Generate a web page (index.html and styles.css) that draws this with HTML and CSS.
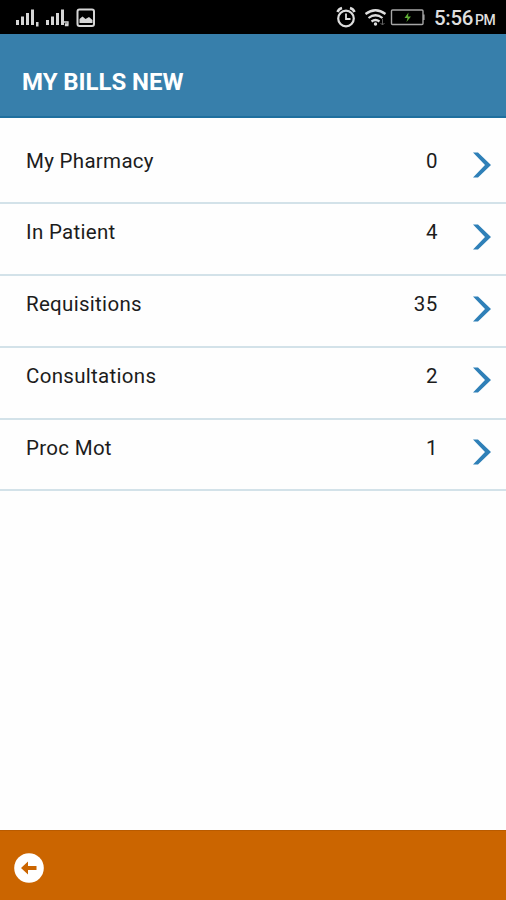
FILE: index.html
```html
<!DOCTYPE html>
<html lang="en">
<head>
<meta charset="utf-8">
<title>My Bills New</title>
<link rel="stylesheet" href="styles.css">
</head>
<body>
<div class="screen">
  <div class="status">
    <svg class="status-left" width="100" height="34" viewBox="0 0 100 34" fill="#d6d6d6">
      <path d="M16 20h3v5h-3zM21 16.500h3v8.500h-3zM26 13h3v12h-3zM31 9.500h3v15.500h-3zM36 22h2.500v4.500h-2.500z"/>
      <path d="M46 20h3v5h-3zM51 16.500h3v8.500h-3zM56 13h3v12h-3zM61 9.500h3v15.500h-3z"/>
      <path d="M64 22h4v2h-2.500v1.500h3" fill="none" stroke="#d6d6d6" stroke-width="1.300"/>
      <rect x="77.500" y="9.500" width="16.500" height="16.500" rx="2" fill="none" stroke="#d6d6d6" stroke-width="2"/>
      <path d="M79.500 23v-4l3-2.500 3 2.500 3.500-2 3.500 3v3z"/>
    </svg>
    <svg class="status-right" width="94" height="34" viewBox="334 0 94 34" fill="none" stroke="#dedede">
      <circle cx="346" cy="18.500" r="7.800" stroke-width="2.200"/>
      <path d="M346 13.500v5.500h4.500" stroke-width="1.800"/>
      <path d="M337.500 12q1-3 4.500-4M354.500 12q-1-3-4.500-4" stroke-width="2.500"/>
      <path d="M365.500 14q10-7.500 20 0M368.500 18q7-5.500 14 0M371.500 21.500q4-3 8 0" stroke-width="2.200"/>
      <circle cx="375.500" cy="24" r="1.700" fill="#dedede" stroke="none"/>
      <path d="M382.500 19v6M380.500 23l2 2 2-2" stroke="#606060" stroke-width="1"/>
      <rect x="391.500" y="10" width="31.500" height="14.500" rx="1" stroke="#a6a6a6" stroke-width="1.400"/>
      <path d="M423.800 14.500v5.500" stroke="#a6a6a6" stroke-width="1.500"/>
      <path d="M408.500 12.500l-4 5.500h3l-1 4 4.500-5.500h-3z" fill="#5fae35" stroke="none"/>
    </svg>
    <span class="time">5:56</span><span class="pm">PM</span>
  </div>
  <header class="header"><h1 class="title">MY BILLS NEW</h1></header>
  <main class="list">
    <div class="row"><span class="label">My Pharmacy</span><span class="count">0</span><svg class="chevron" viewBox="0 0 18 26"><path d="M0 0.500h5L18 13 5 25.500H0L12 13z"/></svg></div>
    <div class="row"><span class="label">In Patient</span><span class="count">4</span><svg class="chevron" viewBox="0 0 18 26"><path d="M0 0.500h5L18 13 5 25.500H0L12 13z"/></svg></div>
    <div class="row"><span class="label">Requisitions</span><span class="count">35</span><svg class="chevron" viewBox="0 0 18 26"><path d="M0 0.500h5L18 13 5 25.500H0L12 13z"/></svg></div>
    <div class="row"><span class="label">Consultations</span><span class="count">2</span><svg class="chevron" viewBox="0 0 18 26"><path d="M0 0.500h5L18 13 5 25.500H0L12 13z"/></svg></div>
    <div class="row"><span class="label">Proc Mot</span><span class="count">1</span><svg class="chevron" viewBox="0 0 18 26"><path d="M0 0.500h5L18 13 5 25.500H0L12 13z"/></svg></div>
  </main>
  <footer class="footer">
    <svg width="30" height="30" viewBox="0 0 30 30"><circle cx="15" cy="15" r="14.800" fill="#fff"/><path d="M7 15l7-6.500v4.500h8.500v4H14v4.500z" fill="#cb6500"/></svg>
  </footer>
</div>
</body>
</html>
```

FILE: styles.css
```css
* { box-sizing: border-box; }
body { margin: 0; background: #fefefe; font-family: Roboto, "Liberation Sans", sans-serif; }
.screen { display: flex; flex-direction: column; height: 900px; overflow: hidden; }
.status { display: flex; height: 34px; background: #000; color: #dedede; }
.status-right { margin-left: 234px; }
.time { margin-left: 6px; font-size: 20.5px; line-height: 36px; width: 41px; font-weight: 500; letter-spacing: -.3px; }
.pm { font-size: 14px; line-height: 40px; font-weight: 500; letter-spacing: -.4px; }
.header { height: 84px; padding: 33px 22px 0; background: #377fab; border-bottom: 2px solid #1f6f9e; }
.title { margin: 0; color: #fff; font-size: 24px; line-height: 30px; font-weight: 700; letter-spacing: -.05px; white-space: nowrap; }
.list { flex: 1; padding-top: 14.5px; }
.row { display: flex; align-items: flex-start; height: 71.75px; padding: 16px 15px 0 26px; border-bottom: 2px solid #d3e2e9; color: #1c1c1c; font-size: 20.5px; line-height: 24px; }
.label { flex: 1; letter-spacing: .3px; }
.count { margin-right: 35px; letter-spacing: .6px; }
.chevron { width: 18px; height: 26px; margin-top: 3.5px; fill: #2f80b8; }
.footer { display: flex; align-items: center; height: 70px; padding: 5px 14px 0; background: #cb6500; border-top: 1px solid #b95b00; }
```
